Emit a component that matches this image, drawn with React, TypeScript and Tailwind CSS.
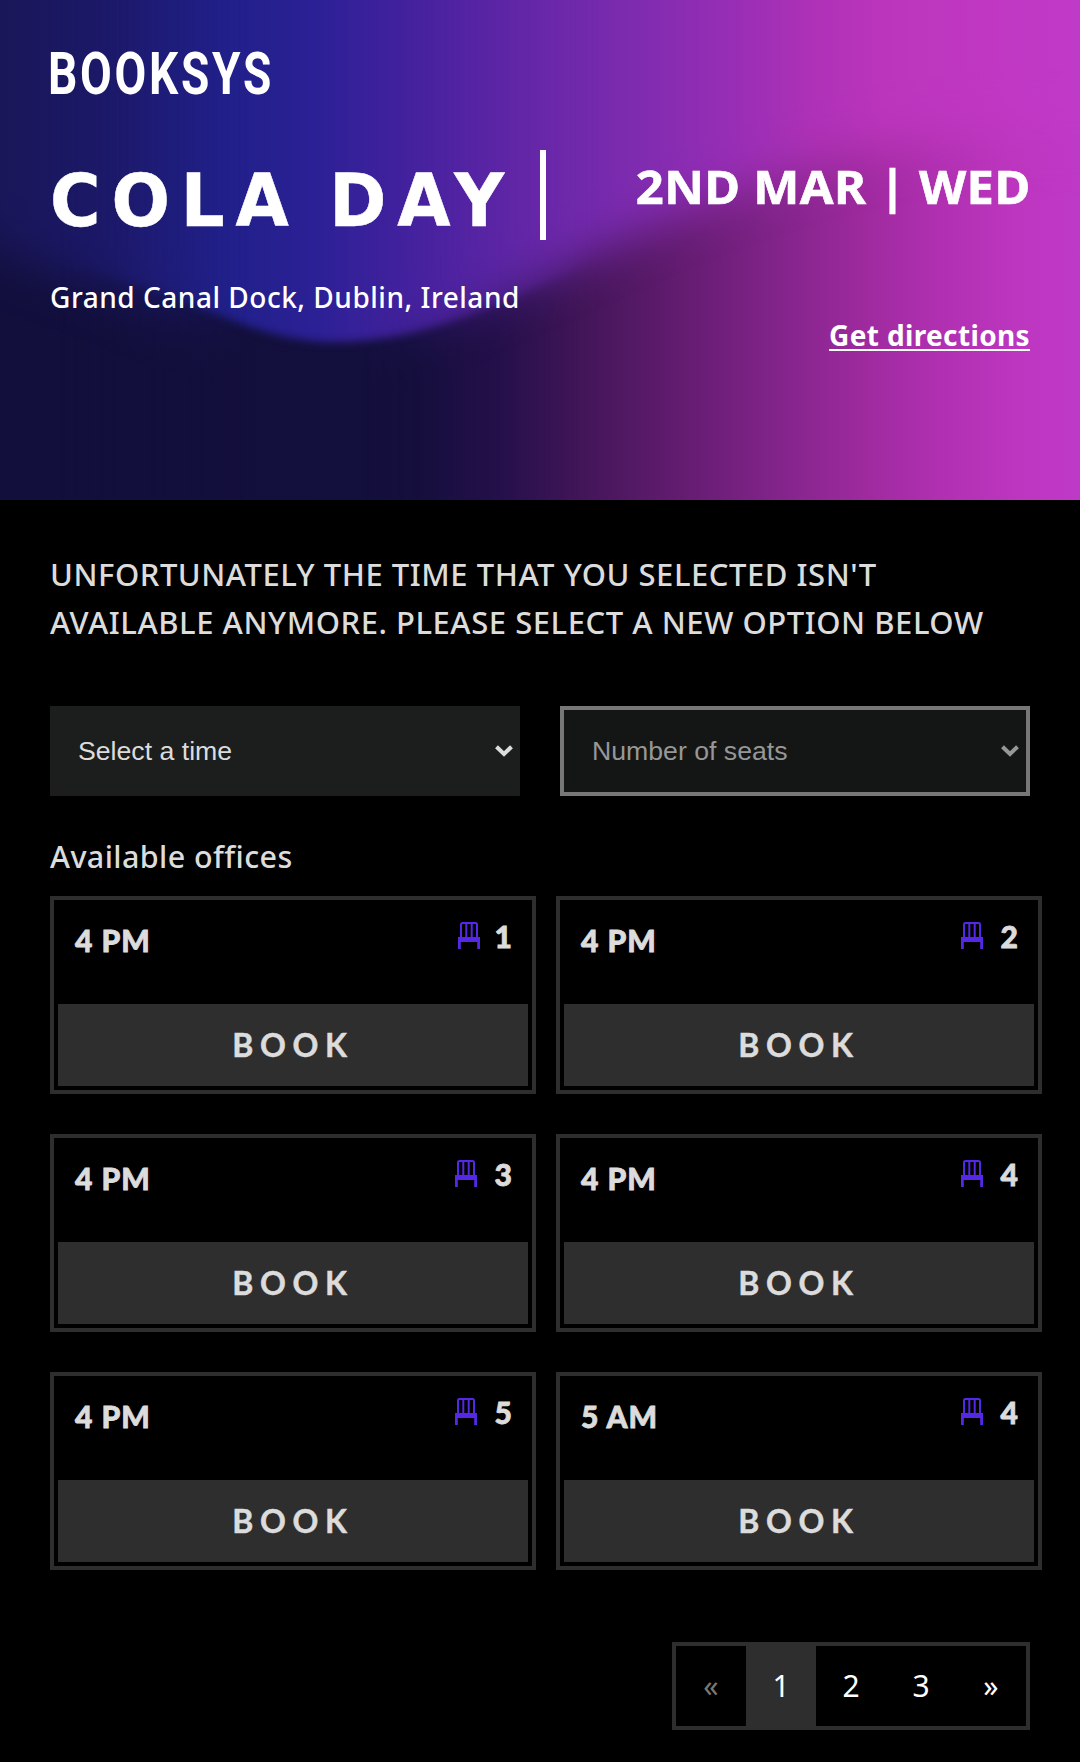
import React from 'react';

const offices = [
  { time: '4 PM', seats: 1 },
  { time: '4 PM', seats: 2 },
  { time: '4 PM', seats: 3 },
  { time: '4 PM', seats: 4 },
  { time: '4 PM', seats: 5 },
  { time: '5 AM', seats: 4 },
];

function HeroArt() {
  return (
    <svg className="absolute inset-0 h-full w-full" viewBox="0 0 1080 500" preserveAspectRatio="none" aria-hidden="true">
      <defs>
        <linearGradient id="low" gradientUnits="userSpaceOnUse" x1="0" y1="0" x2="1080" y2="0">
          <stop offset="0" stopColor="#120f3d" />
          <stop offset="0.38" stopColor="#140f3c" />
          <stop offset="0.46" stopColor="#24104a" />
          <stop offset="0.54" stopColor="#431659" />
          <stop offset="0.63" stopColor="#631c70" />
          <stop offset="0.72" stopColor="#82248a" />
          <stop offset="0.8" stopColor="#9e2a9e" />
          <stop offset="0.87" stopColor="#b030b1" />
          <stop offset="0.94" stopColor="#bc36bf" />
          <stop offset="1" stopColor="#bf39c8" />
        </linearGradient>
        <linearGradient id="high" gradientUnits="userSpaceOnUse" x1="0" y1="0" x2="1080" y2="0">
          <stop offset="0" stopColor="#191659" />
          <stop offset="0.1" stopColor="#1c1969" />
          <stop offset="0.21" stopColor="#21208a" />
          <stop offset="0.29" stopColor="#2b2095" />
          <stop offset="0.4" stopColor="#4a22a0" />
          <stop offset="0.51" stopColor="#6a28a9" />
          <stop offset="0.61" stopColor="#842cb1" />
          <stop offset="0.68" stopColor="#982eb5" />
          <stop offset="0.75" stopColor="#ad31b6" />
          <stop offset="0.82" stopColor="#bb35bc" />
          <stop offset="0.92" stopColor="#c038c2" />
          <stop offset="1" stopColor="#c03ac8" />
        </linearGradient>
        <linearGradient id="focus" gradientUnits="userSpaceOnUse" x1="60" y1="0" x2="600" y2="0">
          <stop offset="0" stopColor="#000" />
          <stop offset="0.35" stopColor="#fff" />
          <stop offset="0.55" stopColor="#fff" />
          <stop offset="1" stopColor="#000" />
        </linearGradient>
        <mask id="sharp" maskUnits="userSpaceOnUse" x="0" y="0" width="1080" height="500">
          <rect width="1080" height="500" fill="url(#focus)" />
        </mask>
        <filter id="b1" filterUnits="userSpaceOnUse" x="-200" y="-150" width="1500" height="700" colorInterpolationFilters="sRGB"><feGaussianBlur stdDeviation="4" /></filter>
        <filter id="b2" filterUnits="userSpaceOnUse" x="-200" y="-150" width="1500" height="700" colorInterpolationFilters="sRGB"><feGaussianBlur stdDeviation="0 24" /></filter>
      </defs>
      <rect width="1080" height="500" fill="url(#low)" />
      <path filter="url(#b2)" fill="url(#high)" d="M-90 -140H1180V140C1050 130 940 135 840 160C700 200 600 254 535 282C470 312 410 342 335 342C250 342 170 318 100 290C50 270 0 256 -90 220Z" />
      <g mask="url(#sharp)">
        <rect width="1080" height="500" fill="url(#low)" />
        <path filter="url(#b1)" fill="url(#high)" d="M-90 -140H1180V100C1050 100 940 115 840 145C700 188 610 254 545 284C470 316 410 342 335 342C265 342 220 312 140 286C60 262 0 245 -90 200Z" />
      </g>
    </svg>
  );
}

function Chair() {
  return (
    <svg className="h-[28px] w-[22px]" viewBox="0 0 22 28" fill="none" stroke="#5527e6" strokeWidth="2" aria-hidden="true">
      <path d="M3 17V3.500Q3 2 4.500 2H17.500Q19 2 19 3.500V17M8.300 2V17M13.700 2V17" />
      <path d="M0 16H22V28H19.200V21H2.800V28H0Z" fill="#5527e6" stroke="none" />
    </svg>
  );
}

function Chevron() {
  return (
    <svg className="h-3 w-[18px]" viewBox="0 0 18 12" fill="none" stroke="currentColor" strokeWidth="4" aria-hidden="true">
      <path d="M1.500 1.700L9 9L16.500 1.700" />
    </svg>
  );
}

function OfficeCard({ time, seats }: { time: string; seats: number }) {
  return (
    <article className="flex h-[198px] w-[486px] flex-col justify-between border-4 border-[#2e2e2e] p-1">
      <div className="flex items-start justify-between pr-[16px] pl-[17px] font-['Lato'] font-black [-webkit-text-stroke:0.8px_#dcdcdc]">
        <span className="pt-[14px] text-[30px] leading-[44px] tracking-[1px] whitespace-pre">{time}</span>
        <span className="flex items-start">
          <span className="pt-[17px]"><Chair /></span>
          <span className={'pt-[10px] text-[30px] leading-[44px] ' + (seats === 1 ? 'ml-[15px]' : 'ml-[18px]')}>{seats}</span>
        </span>
      </div>
      <button className="h-[82px] bg-[#2e2e2e] pb-[1px] font-['Lato'] text-[32px] font-bold tracking-[6.7px] [-webkit-text-stroke:0.5px_#dcdcdc]">BOOK</button>
    </article>
  );
}

export default function App() {
  return (
    <main className="h-[1762px] w-[1080px] overflow-hidden bg-black font-['Noto_Sans',sans-serif] text-[#dcdcdc]">
      <header className="relative h-[500px] overflow-hidden text-white">
        <HeroArt />
        <div className="relative px-[50px] pt-[44px]">
          <div className="-ml-[2px] h-[60px] origin-left scale-x-[0.78] font-['Roboto'] text-[59px] leading-[60px] font-bold tracking-[3.500px] whitespace-nowrap">BOOKSYS</div>
          <div className="mt-[46px] flex h-[90px] items-start justify-between">
            <div className="flex h-[90px] w-[496px] shrink-0 items-center border-r-[6px] border-white">
              <h1 className="origin-left scale-x-[1.04] pt-[11px] font-['DejaVu_Sans_Condensed','DejaVu_Sans'] text-[73.500px] leading-[90px] font-bold tracking-[10.500px] [word-spacing:-5px] whitespace-nowrap [font-stretch:condensed] [-webkit-text-stroke:0.5px_white]">COLA DAY</h1>
            </div>
            <p className="-mr-[0.500px] origin-right scale-x-[1.04] pt-[6px] font-['Noto_Sans'] text-[47px] leading-[60px] font-bold tracking-[0.400px] [word-spacing:-0.500px] whitespace-nowrap [-webkit-text-stroke:0.6px_white]">2ND MAR | WED</p>
          </div>
          <p className="mt-[37px] text-[28px] leading-[40px] font-medium tracking-[0.520px]">Grand Canal Dock, Dublin, Ireland</p>
          <a className="ml-auto block w-fit text-[28px] leading-[36px] font-bold tracking-[0.360px] underline decoration-2 underline-offset-[3px]">Get directions</a>
        </div>
      </header>
      <section className="px-[50px] pt-[50px]">
        <h2 className="text-[31px] leading-[48px] font-medium tracking-[0.540px] whitespace-nowrap">UNFORTUNATELY THE TIME THAT YOU SELECTED ISN'T<br />AVAILABLE ANYMORE. PLEASE SELECT A NEW OPTION BELOW</h2>
        <div className="mt-[60px] flex justify-between font-['Liberation_Sans'] text-[26.667px]">
          <div className="flex h-[90px] w-[470px] items-center justify-between bg-[#1c1e1d] pr-[7px] pl-[28px]">
            <span>Select a time</span><Chevron />
          </div>
          <div className="flex h-[90px] w-[470px] items-center justify-between border-4 border-[#777] bg-[#141615] pr-[7px] pl-[28px] text-[#979797]">
            <span>Number of seats</span><Chevron />
          </div>
        </div>
        <h3 className="mt-[40px] h-[60px] text-[30.500px] leading-[40px] font-medium tracking-[0.400px]">Available offices</h3>
        <div className="grid w-[992px] grid-cols-2 gap-x-5 gap-y-10">
          {offices.map((o, i) => <OfficeCard key={i} {...o} />)}
        </div>
        <nav className="mt-[72px] ml-auto flex h-[88px] w-[358px] border-4 border-[#2e2e2e] text-[30px] text-white">
          {['«', '1', '2', '3', '»'].map((p, i) => (
            <a key={p} className={'flex w-[70px] items-center justify-center pb-[2px] ' + (i === 0 ? 'text-[#777]' : i === 1 ? 'bg-[#2e2e2e]' : '')}>{p}</a>
          ))}
        </nav>
      </section>
    </main>
  );
}
